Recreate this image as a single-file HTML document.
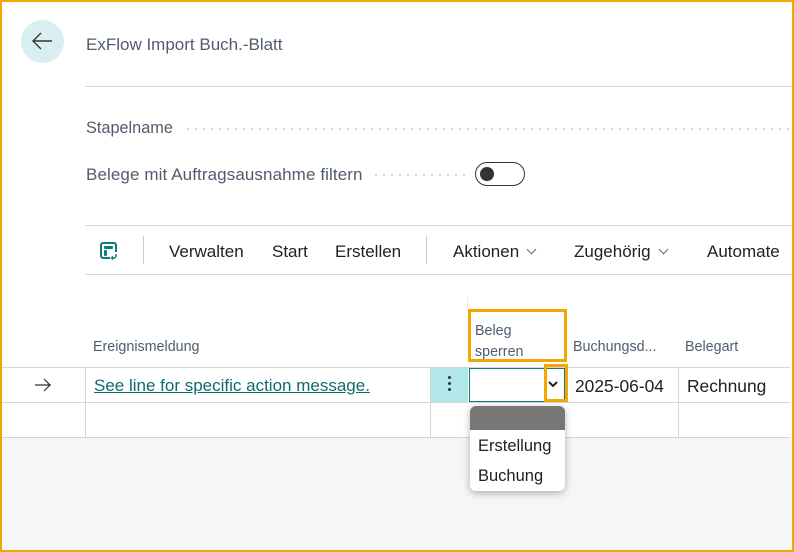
<!DOCTYPE html>
<html><head><meta charset="utf-8"><style>
*{margin:0;padding:0;box-sizing:border-box}
body{width:794px;height:552px;position:relative;overflow:hidden;background:#fff;font-family:"Liberation Sans",sans-serif;color:#212121}
.a{position:absolute;white-space:nowrap}
.hl{position:absolute;height:1px;background:#d6d6d6}
.vl{position:absolute;width:1px;background:#d6d6d6}
.tb{font-size:17px;color:#212121;top:242px}
.hd{font-size:14.3px;color:#505c6d}
.dots{position:absolute;height:2px;background:radial-gradient(circle,#c8c8c8 0.8px,transparent 1.1px) 0 0/8px 2px repeat-x}
.chev{display:inline-block;width:7px;height:7px;border-right:1px solid #666;border-bottom:1px solid #666;transform:rotate(45deg);margin-left:9px;position:relative;top:-4px}
</style></head><body>
<div class="a" style="left:0;top:437px;width:794px;height:115px;background:#f5f6f7"></div>
<div class="a" style="left:21px;top:20px;width:43px;height:43px;border-radius:50%;background:#d9eef1"></div>
<svg class="a" style="left:31px;top:31px" width="22" height="20" viewBox="0 0 22 20"><path d="M21 10H2M10 2L2 10l8 8" fill="none" stroke="#333" stroke-width="1.4"/></svg>
<div class="a" style="left:86px;top:35px;font-size:17px;color:#505c6d">ExFlow Import Buch.-Blatt</div>
<div class="hl" style="left:85px;top:86px;width:709px"></div>
<div class="a" style="left:86px;top:119px;font-size:16.3px;color:#505c6d">Stapelname</div>
<div class="dots" style="left:184px;top:128px;width:606px"></div>
<div class="a" style="left:86px;top:165px;font-size:17px;color:#505c6d;letter-spacing:0.1px">Belege mit Auftragsausnahme filtern</div>
<div class="dots" style="left:372px;top:174px;width:98px"></div>
<div class="a" style="left:475px;top:162px;width:50px;height:24px;border:1.5px solid #333;border-radius:12px"></div>
<div class="a" style="left:480px;top:167px;width:14px;height:14px;border-radius:50%;background:#333"></div>
<div class="hl" style="left:85px;top:225px;width:709px"></div>
<div class="hl" style="left:85px;top:274px;width:709px"></div>
<svg class="a" style="left:99px;top:241px" width="20" height="20" viewBox="0 0 20 20"><path d="M11 17H4a2 2 0 0 1-2-2V4a2 2 0 0 1 2-2h11a2 2 0 0 1 2 2v7" fill="none" stroke="#0d7a7c" stroke-width="2"/><rect x="5" y="5" width="9" height="3" rx="1" fill="#0d7a7c"/><rect x="5" y="9" width="3" height="6" rx="1" fill="#0d7a7c"/><path d="M17 13v2a2 2 0 0 1-2 2h-2M14 15.5l-1.5 1.5 1.5 1.5" fill="none" stroke="#0d7a7c" stroke-width="1.4"/></svg>
<div class="vl" style="left:143px;top:236px;height:28px;background:#ccc"></div>
<div class="a tb" style="left:169px">Verwalten</div>
<div class="a tb" style="left:272px">Start</div>
<div class="a tb" style="left:335px">Erstellen</div>
<div class="vl" style="left:426px;top:236px;height:28px;background:#ccc"></div>
<div class="a tb" style="left:453px">Aktionen<span class="chev"></span></div>
<div class="a tb" style="left:574px">Zugehörig<span class="chev"></span></div>
<div class="a tb" style="left:707px">Automate</div>
<div class="vl" style="left:467px;top:296px;height:12px;background:#eee"></div>
<div class="a hd" style="left:93px;top:339px">Ereignismeldung</div>
<div class="a hd" style="left:475px;top:321px;line-height:21px">Beleg<br>sperren</div>
<div class="a hd" style="left:573px;top:339px">Buchungsd...</div>
<div class="a hd" style="left:685px;top:339px">Belegart</div>
<div class="hl" style="left:0;top:367px;width:790px"></div>
<div class="hl" style="left:0;top:402px;width:790px"></div>
<div class="hl" style="left:0;top:437px;width:790px"></div>
<div class="vl" style="left:85px;top:367px;height:70px"></div>
<div class="vl" style="left:430px;top:367px;height:70px"></div>
<div class="vl" style="left:678px;top:367px;height:70px"></div>
<div class="a" style="left:431px;top:368px;width:37px;height:34px;background:#b2e7ea"></div>
<div class="a" style="left:448px;top:376px;width:3px;height:3px;background:#333;border-radius:50%;box-shadow:0 6px 0 #333,0 12px 0 #333"></div>
<svg class="a" style="left:34px;top:378px" width="18" height="14" viewBox="0 0 18 14"><path d="M1 7h16M10 1l6 6-6 6" fill="none" stroke="#333" stroke-width="1.2"/></svg>
<div class="a" style="left:94px;top:376px;font-size:17px;color:#0d6b6e;text-decoration:underline">See line for specific action message.</div>
<div class="a" style="left:469px;top:368px;width:96px;height:34px;border:1px solid #0d7a7c;background:#fff"></div>
<svg class="a" style="left:548px;top:380px" width="10" height="8" viewBox="0 0 10 8"><path d="M1 2l4 4 4-4" fill="none" stroke="#222" stroke-width="2"/></svg>
<div class="a" style="left:575px;top:376px;font-size:17.4px">2025-06-04</div>
<div class="a" style="left:687px;top:376px;font-size:17.4px">Rechnung</div>
<div class="a" style="left:470px;top:406px;width:95px;height:85px;background:#fff;border-radius:6px;box-shadow:0 2px 8px rgba(0,0,0,.3);overflow:hidden">
<div style="height:24px;background:#777"></div>
<div style="font-size:16.5px;padding:7px 0 0 8px;height:30px">Erstellung</div>
<div style="font-size:16.5px;padding:7px 0 0 8px">Buchung</div>
</div>
<div class="a" style="left:468px;top:309px;width:99px;height:53px;border:3px solid #f4a700"></div>
<div class="a" style="left:544px;top:364px;width:24px;height:38px;border:3px solid #f4a700"></div>
<div class="a" style="left:0;top:0;width:794px;height:552px;border:2px solid #f4a700"></div>
</body></html>
